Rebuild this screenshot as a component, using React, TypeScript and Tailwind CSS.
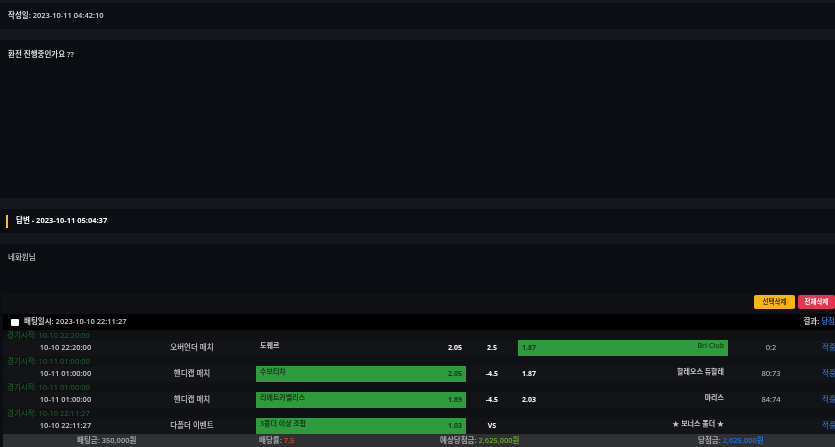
const font = "font-['Open_Sans','Noto_Sans_CJK_KR',sans-serif]";

type Bet = {
  start: string;
  time: string;
  kind: string;
  home: string;
  homeOdds: string;
  line: string;
  awayOdds: string;
  away: string;
  score: string;
  homePicked: boolean;
  awayPicked: boolean;
};

const bets: Bet[] = [
  { start: "10-10 22:20:00", time: "10-10 22:20:00", kind: "오버언더 매치", home: "도퀘르", homeOdds: "2.05", line: "2.5", awayOdds: "1.87", away: "Bri Club", score: "0:2", homePicked: false, awayPicked: true },
  { start: "10-11 01:00:00", time: "10-11 01:00:00", kind: "핸디캡 매치", home: "수보티차", homeOdds: "2.05", line: "-4.5", awayOdds: "1.87", away: "할레오스 듀할레", score: "80:73", homePicked: true, awayPicked: false },
  { start: "10-11 01:00:00", time: "10-11 01:00:00", kind: "핸디캡 매치", home: "리에트카벨리스", homeOdds: "1.89", line: "-4.5", awayOdds: "2.03", away: "마리스", score: "84:74", homePicked: true, awayPicked: false },
  { start: "10-10 22:11:27", time: "10-10 22:11:27", kind: "다폴더 이벤트", home: "3폴더 이상 조합", homeOdds: "1.03", line: "VS", awayOdds: "", away: "★ 보너스 폴더 ★", score: "", homePicked: true, awayPicked: false },
];

const Band = () => <div className="h-[11px] bg-[#14171d]" />;

const BetRow = ({ bet }: { bet: Bet }) => (
  <>
    <div className="h-[10px] pl-[4px] text-[7.5px] leading-[10px] text-[#1c6e29]">경기시작: {bet.start}</div>
    <div className="grid h-[16px] grid-cols-[125px_128px_210px_52px_210px_86px_1fr] items-center bg-[#131417] text-[7.5px] text-[#c9c9c9]">
      <div className="text-center font-semibold">{bet.time}</div>
      <div className="text-center font-medium">{bet.kind}</div>
      <div className={`flex h-full items-start justify-between px-[4px] pt-[1px] text-[7px] ${bet.homePicked ? "bg-[#2f9a3e] text-[#14391a]" : ""}`}>
        <span className="font-semibold leading-[10px]">{bet.home}</span>
        <span className={`self-center font-bold ${bet.homePicked ? "" : "text-white"}`}>{bet.homeOdds}</span>
      </div>
      <div className="text-center text-[7px] font-bold text-white">{bet.line}</div>
      <div className={`flex h-full items-start justify-between px-[4px] pt-[1px] text-[7px] ${bet.awayPicked ? "bg-[#2f9a3e] text-[#14391a]" : ""}`}>
        <span className={`self-center font-bold ${bet.awayPicked ? "" : "text-white"}`}>{bet.awayOdds}</span>
        <span className="font-semibold leading-[10px]">{bet.away}</span>
      </div>
      <div className="text-center font-medium">{bet.score}</div>
      <div className="whitespace-nowrap pl-[8px] font-medium text-[#2c6fd0]">적중</div>
    </div>
  </>
);

export default function App() {
  return (
    <div className={`h-[447px] w-[835px] overflow-hidden bg-[#0a0d11] blur-[0.3px] ${font}`}>
      <div className="h-[3px] bg-[#14171d]" />
      <div className="flex h-[26px] items-center bg-[#0c0e13] pl-[8px] text-[7.5px] font-semibold text-[#d8d8d8]">
        작성일: 2023-10-11 04:42:10
      </div>
      <Band />
      <div className="h-[158px] pl-[8px] pt-[7px] text-[7.5px] font-semibold leading-[14px] text-[#d8d8d8]">
        환전 진행중인가요 ??
      </div>
      <Band />
      <div className="flex h-[24px] items-center bg-[#0c0e13] pl-[6px]">
        <div className="h-[13px] w-[2px] bg-[#f2c037]" />
        <span className="ml-[8px] text-[7.5px] font-bold text-white">답변 - 2023-10-11 05:04:37</span>
      </div>
      <Band />
      <div className="h-[50px] pl-[8px] pt-[6px] text-[7.5px] font-medium leading-[14px] text-[#c8c8c8]">
        네화원님
      </div>
      <div className="ml-[3px] h-[153px] bg-[#0f1114]">
        <div className="flex h-[20px] items-start justify-end gap-[3px] pt-[1px]">
          <button className="h-[14px] w-[41px] rounded-[2px] bg-[#f7b512] text-[6.5px] font-semibold text-[#4a3500]">선택삭제</button>
          <button className="h-[14px] w-[37px] rounded-[2px] bg-[#e5364f] text-[6.5px] font-semibold text-white">전체삭제</button>
        </div>
        <div className="flex h-[16px] items-center justify-between bg-black pl-[8px] text-[7.5px] font-semibold text-[#d0d0d0]">
          <div className="flex items-center">
            <span className="h-[7px] w-[8px] rounded-[1px] bg-white" />
            <span className="ml-[5px]">배팅일시: 2023-10-10 22:11:27</span>
          </div>
          <div className="whitespace-nowrap">
            결과: <span className="text-[#2c6fd0]">당첨</span>
          </div>
        </div>
        {bets.map((bet, i) => (
          <BetRow key={i} bet={bet} />
        ))}
        <div className="grid h-[13px] grid-cols-[213px_150px_196px_1fr] items-center bg-[#2e3032] text-[7.5px] font-semibold text-[#a9a9a9]">
          <div className="pl-[74px]">배팅금: 350,000원</div>
          <div className="pl-[43px]">배당률: <span className="text-[#d2521e]">7.5</span></div>
          <div className="pl-[74px]">예상당첨금: <span className="text-[#6fa52f]">2,625,000원</span></div>
          <div className="pl-[136px]">당첨금: <span className="text-[#2c6fd0]">2,625,000원</span></div>
        </div>
      </div>
    </div>
  );
}
